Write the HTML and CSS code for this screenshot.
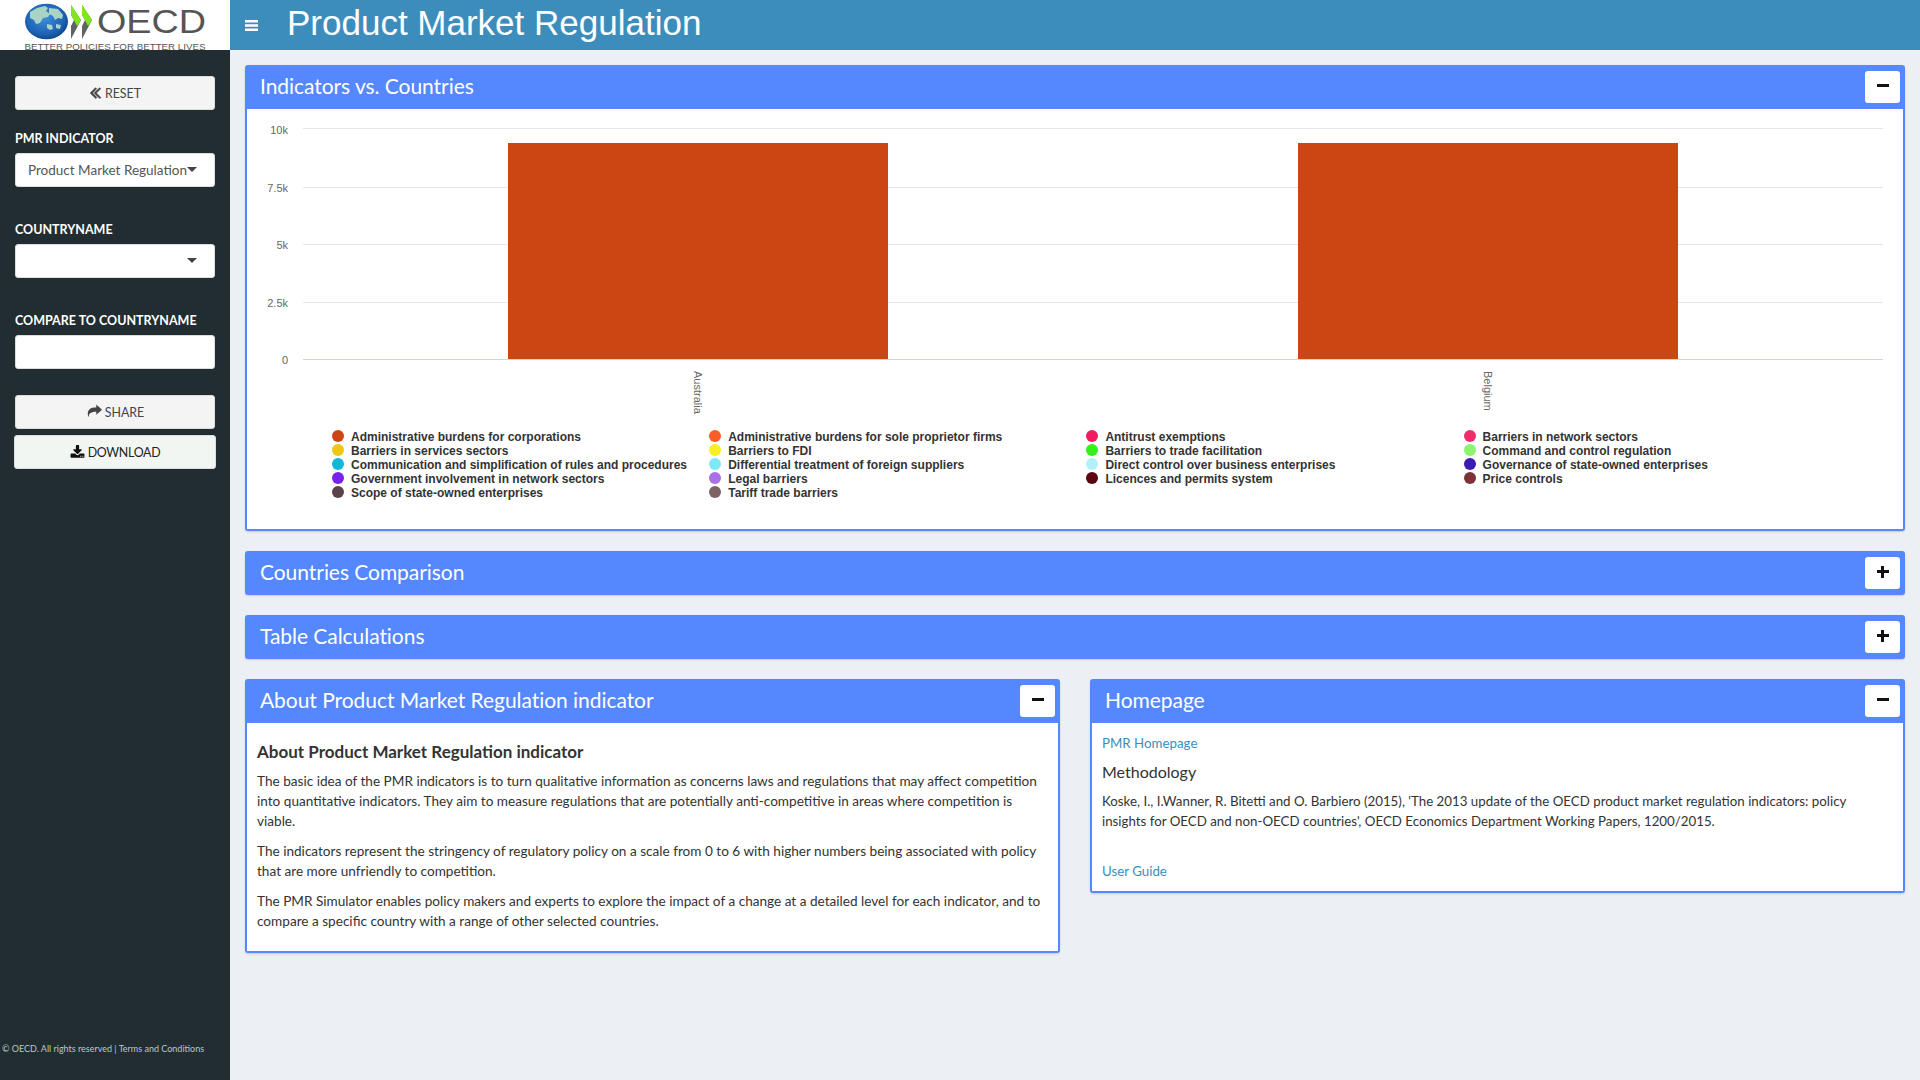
FILE: index.html
```html
<!DOCTYPE html>
<html lang="en">
<head>
<meta charset="utf-8">
<title>Product Market Regulation</title>
<link rel="stylesheet" href="styles.css">
</head>
<body>
<div class="app">
  <a class="logo" href="#">
    <svg width="230" height="50" viewBox="0 0 230 50">
      <defs>
        <radialGradient id="globe" cx="0.45" cy="0.4" r="0.65">
          <stop offset="0" stop-color="#3f8fdc"/>
          <stop offset="0.7" stop-color="#1c62b4"/>
          <stop offset="1" stop-color="#0e3f80"/>
        </radialGradient>
      </defs>
      <ellipse cx="46.500" cy="21.500" rx="21.500" ry="17.800" fill="url(#globe)"/>
      <path d="M30 12l7-4 8-2 3 2-2 3 4 3-2 3-5 1-3 5-4 1-2-4-4-2zM49 8l9 1 5 6-1 4-4-1-3 2-2-4-4-2zM47 24l5 1 1 4-3 1-3-2zM56 24l5 1-1 4-4-1z" fill="#a9d3c4"/>
      <path d="M71 5l10 15-10 19V26l3-6-3-5zM82 5l10 15-10 19V26l3-6-3-5z" fill="#5f6364"/>
      <path d="M71 5l10 15-4 6-3-6-3-5zM82 5l10 15-4 6-3-6-3-5z" fill="#7fe81a"/>
      <text class="logo-oecd" x="97" y="33" textLength="109" lengthAdjust="spacingAndGlyphs">OECD</text>
      <text class="logo-tag" x="24.500" y="50" textLength="181" lengthAdjust="spacingAndGlyphs">BETTER POLICIES FOR BETTER LIVES</text>
    </svg>
  </a>
  <header class="topbar">
    <svg class="bars" width="13" height="11" viewBox="0 0 13 11"><path d="M0 0h13v2.500H0zM0 4.250h13v2.500H0zM0 8.500h13V11H0z" fill="#fff"/></svg>
    <h1 class="page-title">Product Market Regulation</h1>
  </header>
  <aside class="sidebar">
    <button class="btn btn-reset" type="button">
      <svg class="ico ico-reset" viewBox="0 0 1792 1792"><path d="M1011 1376q0 13-10 23l-50 50q-10 10-23 10t-23-10L419 973q-10-10-10-23t10-23l466-466q10-10 23-10t23 10l50 50q10 10 10 23t-10 23L618 950l393 393q10 10 10 23zm384 0q0 13-10 23l-50 50q-10 10-23 10t-23-10L803 973q-10-10-10-23t10-23l466-466q10-10 23-10t23 10l50 50q10 10 10 23t-10 23l-393 393 393 393q10 10 10 23z"/></svg>
      RESET
    </button>
    <div class="field">
      <div class="field-label">PMR INDICATOR</div>
      <div class="select"><span class="select-value">Product Market Regulation</span><i class="caret"></i></div>
    </div>
    <div class="field">
      <div class="field-label">COUNTRYNAME</div>
      <div class="select"><span class="select-value"></span><i class="caret"></i></div>
    </div>
    <div class="field">
      <div class="field-label">COMPARE TO COUNTRYNAME</div>
      <div class="select"></div>
    </div>
    <button class="btn btn-share" type="button">
      <svg class="ico ico-share" viewBox="0 0 1792 1792"><path d="M1792 640l-640-576v320C500 384 200 600 200 1100c0 150 50 260 110 340 20 20 40 10 35-15-60-300 100-560 807-560v331z"/></svg>
      SHARE
    </button>
    <button class="btn btn-download" type="button">
      <svg class="ico ico-dl" viewBox="0 0 1792 1792"><path d="M1344 1344q0-26-19-45t-45-19-45 19-19 45 19 45 45 19 45-19 19-45zm256 0q0-26-19-45t-45-19-45 19-19 45 19 45 45 19 45-19 19-45zm128-224v320q0 40-28 68t-68 28H160q-40 0-68-28t-28-68v-320q0-40 28-68t68-28h465l135 136q58 56 136 56t136-56l136-136h464q40 0 68 28t28 68zm-325-569q17 41-14 70l-448 448q-18 19-45 19t-45-19L403 621q-31-29-14-70 17-39 59-39h256V64q0-26 19-45t45-19h256q26 0 45 19t19 45v448h256q42 0 59 39z"/></svg>
      DOWNLOAD
    </button>
    <div class="sidebar-foot">© OECD. All rights reserved | Terms and Conditions</div>
  </aside>
  <main class="content">
    <section class="box">
      <div class="box-head"><h3 class="box-title">Indicators vs. Countries</h3><button class="tool" type="button"><i class="minus"></i></button></div>
      <div class="box-body chart-body">
        <svg class="chart" width="1656" height="321" viewBox="247 109 1656 321">
          <g class="grid">
            <path d="M303 128.500H1883M303 187.500H1883M303 244.500H1883M303 302.500H1883"/>
          </g>
          <path class="axis" d="M303 359.500H1883"/>
          <rect class="bar" x="508" y="143" width="380" height="216"/>
          <rect class="bar" x="1298" y="143" width="380" height="216"/>
          <g class="tick">
            <text x="288" y="134">10k</text>
            <text x="288" y="192">7.5k</text>
            <text x="288" y="249">5k</text>
            <text x="288" y="307">2.5k</text>
            <text x="288" y="364">0</text>
          </g>
          <g class="cat">
            <text transform="translate(694 371) rotate(90)">Australia</text>
            <text transform="translate(1484 371) rotate(90)">Belgium</text>
          </g>
        </svg>
        <ul class="legend">
          <li><i class="dot" style="background:#cc4613"></i>Administrative burdens for corporations</li>
          <li><i class="dot" style="background:#fb5d27"></i>Administrative burdens for sole proprietor firms</li>
          <li><i class="dot" style="background:#ee1f60"></i>Antitrust exemptions</li>
          <li><i class="dot" style="background:#f22c6c"></i>Barriers in network sectors</li>
          <li><i class="dot" style="background:#edc80f"></i>Barriers in services sectors</li>
          <li><i class="dot" style="background:#f8ee23"></i>Barriers to FDI</li>
          <li><i class="dot" style="background:#35f01a"></i>Barriers to trade facilitation</li>
          <li><i class="dot" style="background:#8bf470"></i>Command and control regulation</li>
          <li><i class="dot" style="background:#0eb8d6"></i>Communication and simplification of rules and procedures</li>
          <li><i class="dot" style="background:#7fe8f6"></i>Differential treatment of foreign suppliers</li>
          <li><i class="dot" style="background:#b4f0f8"></i>Direct control over business enterprises</li>
          <li><i class="dot" style="background:#3a1cb4"></i>Governance of state-owned enterprises</li>
          <li><i class="dot" style="background:#7a22ee"></i>Government involvement in network sectors</li>
          <li><i class="dot" style="background:#a970e8"></i>Legal barriers</li>
          <li><i class="dot" style="background:#5c0610"></i>Licences and permits system</li>
          <li><i class="dot" style="background:#7c3338"></i>Price controls</li>
          <li><i class="dot" style="background:#58444a"></i>Scope of state-owned enterprises</li>
          <li><i class="dot" style="background:#7f6266"></i>Tariff trade barriers</li>
        </ul>
      </div>
    </section>
    <section class="box box-closed">
      <div class="box-head"><h3 class="box-title">Countries Comparison</h3><button class="tool" type="button"><i class="plus"></i></button></div>
    </section>
    <section class="box box-closed">
      <div class="box-head"><h3 class="box-title">Table Calculations</h3><button class="tool" type="button"><i class="plus"></i></button></div>
    </section>
    <div class="columns">
      <section class="box">
        <div class="box-head"><h3 class="box-title">About Product Market Regulation indicator</h3><button class="tool" type="button"><i class="minus"></i></button></div>
        <div class="box-body text-body about">
          <h4 class="about-title">About Product Market Regulation indicator</h4>
          <p>The basic idea of the PMR indicators is to turn qualitative information as concerns laws and regulations that may affect competition into quantitative indicators. They aim to measure regulations that are potentially anti-competitive in areas where competition is viable.</p>
          <p>The indicators represent the stringency of regulatory policy on a scale from 0 to 6 with higher numbers being associated with policy that are more unfriendly to competition.</p>
          <p>The PMR Simulator enables policy makers and experts to explore the impact of a change at a detailed level for each indicator, and to compare a specific country with a range of other selected countries.</p>
        </div>
      </section>
      <section class="box">
        <div class="box-head"><h3 class="box-title">Homepage</h3><button class="tool" type="button"><i class="minus"></i></button></div>
        <div class="box-body text-body home">
          <a class="link" href="#">PMR Homepage</a>
          <h4 class="method">Methodology</h4>
          <p>Koske, I., I.Wanner, R. Bitetti and O. Barbiero (2015), 'The 2013 update of the OECD product market regulation indicators: policy insights for OECD and non-OECD countries', OECD Economics Department Working Papers, 1200/2015.</p>
          <a class="link guide" href="#">User Guide</a>
        </div>
      </section>
    </div>
  </main>
</div>
</body>
</html>
```
FILE: styles.css
```css
* { box-sizing: border-box; }
html, body { margin: 0; height: 100%; }
body {
  font-family: "Lato", "Liberation Sans", sans-serif;
  font-size: 13.500px;
  line-height: 20px;
  color: #333;
  background: #ecf0f5;
  overflow: hidden;
}
.app {
  display: grid;
  grid-template-columns: 230px 1fr;
  grid-template-rows: 50px 1fr;
  height: 100vh;
}
.logo { display: block; background: #fff; height: 50px; }
.logo svg { display: block; overflow: visible; }
.logo-oecd { font-family: "Liberation Sans", sans-serif; font-size: 33px; fill: #555; }
.logo-tag { font-family: "Liberation Sans", sans-serif; font-size: 9.500px; fill: #555; }
.topbar {
  background: #3c8dbc;
  display: flex;
  align-items: center;
  padding-left: 15px;
  color: #fff;
}
.bars { flex: none; margin-right: 29px; }
.page-title {
  margin: -5px 0 0;
  font: 400 35px/44px "Liberation Sans", sans-serif;
  color: #fff;
}
.sidebar {
  background: #222d32;
  padding: 26px 15px 0;
  display: flex;
  flex-direction: column;
}
.btn {
  height: 34px;
  width: 200px;
  border: 1px solid #ddd;
  border-radius: 3px;
  background: #f4f4f4;
  color: #444;
  font: 400 12.400px/20px "Lato", sans-serif;
  display: flex;
  align-items: center;
  justify-content: center;
  gap: 3px;
  padding: 1px 0 0;
  flex: none;
}
.ico { width: 15px; height: 15px; fill: #444; flex: none; }
.ico-reset { width: 19px; height: 19px; margin: -2px -3px 0; stroke: #444; stroke-width: 70; }
.ico-share { width: 16px; height: 16px; margin-top: -2px; }
.btn-reset { margin-bottom: 18px; }
.field + .field { margin-top: 32px; }
.field-label {
  color: #fff;
  font-weight: 700;
  font-size: 12.500px;
  line-height: 20px;
  padding-top: 1px;
  margin-bottom: 4px;
  height: 21px;
  white-space: nowrap;
}
.select {
  height: 34px;
  width: 200px;
  background: #fff;
  border: 1px solid #ddd;
  border-radius: 3px;
  display: flex;
  align-items: center;
  padding: 0 12px;
  color: #555;
}
.select-value { flex: 1; white-space: nowrap; }
.caret {
  flex: none;
  width: 0;
  height: 0;
  margin-top: -2px;
  border-left: 5px solid transparent;
  border-right: 5px solid transparent;
  border-top: 5px solid #444;
  margin-right: 5px;
}
.btn-share { margin-top: 26px; }
.btn-download {
  margin: 6px 0 0 -1px;
  width: 202px;
  background: #f2f6f2;
  color: #222;
  letter-spacing: -.3px;
}
.ico-dl { fill: #111; }
.sidebar-foot {
  margin: auto 0 0 -13px;
  padding-bottom: 23px;
  font-size: 9px;
  line-height: 16px;
  color: #b8c7ce;
  white-space: nowrap;
}
.content {
  padding: 15px;
  display: flex;
  flex-direction: column;
  gap: 20px;
  min-width: 0;
}
.box {
  background: #5588ff;
  border-radius: 3px;
  box-shadow: 0 1px 2px rgba(0,0,0,.15);
  padding: 0 2px 2px;
}
.box-closed { padding-bottom: 0; }
.box-head {
  height: 44px;
  display: flex;
  align-items: center;
  justify-content: space-between;
  padding: 0 3px 0 13px;
}
.box-title {
  margin: -3px 0 0;
  font-weight: 400;
  font-size: 21px;
  letter-spacing: -.05px;
  line-height: 30px;
  color: #fff;
}
.tool {
  width: 35px;
  height: 32px;
  background: #fff;
  border: 0;
  border-radius: 3px;
  padding: 0;
  display: flex;
  align-items: center;
  justify-content: center;
}
.minus { display: block; width: 12px; height: 3px; background: #111; margin-top: -3px; }
.plus { display: block; width: 12px; height: 12px; margin-top: -3px;
  background: linear-gradient(#111,#111) center/12px 3px no-repeat, linear-gradient(#111,#111) center/3px 12px no-repeat; }
.box-body { background: #fff; }
.chart-body { height: 420px; }
.chart { display: block; }
.grid path { stroke: #e6e6e6; fill: none; }
.axis { stroke: #ccd6eb; fill: none; }
.bar { fill: #cc4613; }
.tick text { font: 11px "Liberation Sans", sans-serif; fill: #666; text-anchor: end; }
.cat text { font: 11px "Liberation Sans", sans-serif; fill: #666; }
.legend {
  list-style: none;
  margin: 0;
  padding: 0 0 0 85px;
  display: grid;
  grid-template-columns: repeat(4, 377.200px);
  grid-auto-rows: 14px;
}
.legend li {
  display: flex;
  align-items: center;
  font: 700 12px/14px "Liberation Sans", sans-serif;
  color: #333;
  white-space: nowrap;
}
.dot { flex: none; width: 12px; height: 12px; border-radius: 50%; margin-right: 7px; margin-top: -2px; }
.columns {
  display: grid;
  grid-template-columns: 1fr 1fr;
  gap: 30px;
  align-items: start;
}
.text-body { padding: 10px; }
.text-body p { margin: 0 0 10px; }
.about { padding-bottom: 10px; padding-top: 19px; font-size: 13.600px; }
.about-title { margin: 0 0 9px; font-size: 17px; line-height: 20px; font-weight: 700; }
.home { padding-top: 10px; padding-bottom: 0; height: 168px; font-size: 13.300px; }
.link { color: #3c8dbc; text-decoration: none; display: block; }
.method { margin: 9px 0 9px; font-size: 16px; font-weight: 400; line-height: 20px; }
.guide { margin-top: 30px; }
```
